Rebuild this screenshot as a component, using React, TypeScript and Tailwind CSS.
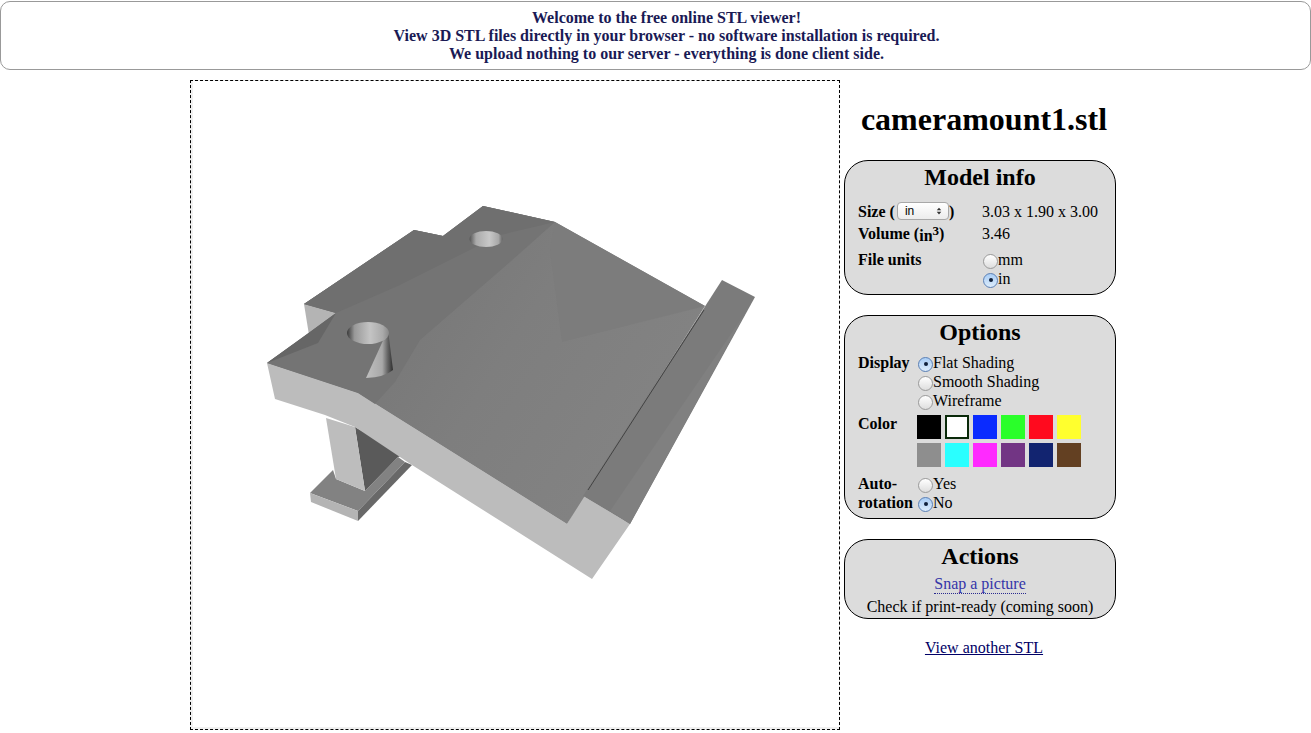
import React from 'react';

const Radio: React.FC<{ on?: boolean }> = ({ on }) =>
  on ? (
    <span className="inline-flex w-[15px] h-[15px] shrink-0 rounded-full border border-[#5a7fb5] bg-gradient-to-b from-[#a9cdf5] to-[#dcecfb] items-center justify-center">
      <span className="w-[4px] h-[4px] rounded-full bg-[#10203a]" />
    </span>
  ) : (
    <span className="inline-block w-[15px] h-[15px] shrink-0 rounded-full border border-[#9a9a9a] bg-gradient-to-b from-[#ffffff] to-[#dedede]" />
  );

const RadioRow: React.FC<{ on?: boolean; label: string }> = ({ on, label }) => (
  <div className="flex items-center h-[19px]">
    <span className="mt-[3px] flex">
      <Radio on={on} />
    </span>
    <span>{label}</span>
  </div>
);

const colors = [
  'bg-[#000000]',
  'bg-[#ffffff] border-2 border-[#0a2a0a]',
  'bg-[#0a2bff]',
  'bg-[#2aff2a]',
  'bg-[#ff0a1e]',
  'bg-[#ffff2e]',
  'bg-[#8e8e8e]',
  'bg-[#2affff]',
  'bg-[#ff2aff]',
  'bg-[#723584]',
  'bg-[#122470]',
  'bg-[#634022]',
];

const Model: React.FC = () => (
  <svg viewBox="193 81 646 646" className="w-full h-full block">
    <defs>
      <linearGradient id="hole1" x1="0" x2="1" y1="0" y2="0">
        <stop offset="0" stopColor="#555" />
        <stop offset="0.2" stopColor="#aaa" />
        <stop offset="0.6" stopColor="#c8c8c8" />
        <stop offset="0.88" stopColor="#a8a8a8" />
        <stop offset="1" stopColor="#666" />
      </linearGradient>
      <linearGradient id="hole2" x1="0" x2="1" y1="0" y2="0">
        <stop offset="0" stopColor="#3a3a3a" />
        <stop offset="0.18" stopColor="#999" />
        <stop offset="0.55" stopColor="#c4c4c4" />
        <stop offset="0.85" stopColor="#aaa" />
        <stop offset="1" stopColor="#888" />
      </linearGradient>
      <linearGradient id="bore" x1="0" x2="1" y1="0" y2="0">
        <stop offset="0" stopColor="#c0c0c0" />
        <stop offset="0.6" stopColor="#a8a8a8" />
        <stop offset="0.8" stopColor="#666" />
        <stop offset="1" stopColor="#2e2e2e" />
      </linearGradient>
      <linearGradient id="plate" gradientUnits="userSpaceOnUse" x1="400" y1="300" x2="620" y2="440">
        <stop offset="0" stopColor="#787878" />
        <stop offset="0.45" stopColor="#7e7e7e" />
        <stop offset="1" stopColor="#828282" />
      </linearGradient>
    </defs>
    {/* foot and pillar */}
    <polygon points="310,493 333,470 336,479 365,491 398,457 405,462 358,511" fill="#828282" />
    <polygon points="310,493 358,511 358,521 311,502" fill="#b4b4b4" />
    <polygon points="358,511 405,462 412,465 358,521" fill="#686868" />
    <polygon points="355,427 405,455 398,457 365,491" fill="#5a5a5a" />
    <polygon points="326,418 355,427 365,491 336,479" fill="#bdbdbd" />
    {/* notch side */}
    <polygon points="304,304 336,313 309,335" fill="#b4b4b4" />
    {/* front face */}
    <polygon
      points="267,363 358,393 567,524 583,496 630,524 592,579 412,465 355,427 325,415 275,399"
      fill="#bcbcbc"
    />
    {/* top plate */}
    <polygon
      points="304,304 414,230 443,236 483,206 555,222 705,306 567,524 358,393 267,363 309,333 336,313"
      fill="url(#plate)"
    />
    <polygon
      points="304,304 414,230 443,236 483,206 555,222 510,262 420,340 395,382 375,404 358,393 267,363 309,333 336,313"
      fill="#747474"
    />
    <polygon points="414,230 443,236 483,206 555,222 500,235 400,285 336,313 304,304" fill="#6f6f6f" />
    <polygon points="267,363 336,313 318,343" fill="#666666" />
    <polygon points="555,222 705,306 562,342 550,250" fill="#7c7c7c" />
    {/* holes */}
    <ellipse cx="486" cy="239" rx="16.5" ry="8" fill="url(#hole1)" />
    <path d="M381 345 L388 330 L393 370 Q385 377 366 378 Z" fill="url(#bore)" />
    <ellipse cx="368" cy="333" rx="21" ry="11" fill="url(#hole2)" />
    {/* rail */}
    <polygon points="722,280 755,297 630,524 583,496" fill="#7b7b7b" />
    <polygon points="746,312 630,524 610,511" fill="#808080" />
    <line x1="704" y1="310" x2="588" y2="490" stroke="#333" strokeWidth="0.8" />
  </svg>
);

const Panel: React.FC<{ title: string; className: string; children: React.ReactNode }> = ({
  title,
  className,
  children,
}) => (
  <div className={`w-[272px] rounded-[24px] border border-black bg-[#dcdcdc] ${className}`}>
    <h2 className="text-[24px] leading-[28px] font-bold text-center pt-[2px]">{title}</h2>
    {children}
  </div>
);

const App: React.FC = () => (
  <div className="font-['Liberation_Serif',serif] text-[16px] leading-[19px] text-black bg-white min-h-[733px]">
    <div className="mt-[1px] h-[69px] rounded-[10px] border border-[#999999] text-center font-bold text-[#1a1a55] text-[16px] leading-[18px] pt-[7px] pl-[22px]">
      <div>Welcome to the free online STL viewer!</div>
      <div>View 3D STL files directly in your browser - no software installation is required.</div>
      <div>We upload nothing to our server - everything is done client side.</div>
    </div>

    <div className="flex pl-[190px] mt-[10px]">
      <div className="w-[650px] h-[650px] border border-dashed border-black bg-[#f0f0f0] pl-[2px] pb-[2px]">
        <div className="w-full h-full bg-white">
          <Model />
        </div>
      </div>

      <div className="w-[280px] ml-[4px]">
        <h1 className="text-[32px] leading-[37px] font-bold text-center mt-[21px]">cameramount1.stl</h1>

        <Panel title="Model info" className="mt-[22px] h-[135px]">
          <div className="grid grid-cols-[124px_1fr] pl-[13px] mt-[9px]">
            <div className="font-bold flex items-center h-[22px]">
              Size (
              <span className="relative inline-flex items-center w-[52px] h-[18px] ml-[2px] rounded-[4px] border border-[#a8a8a8] bg-gradient-to-b from-[#ffffff] to-[#ececec] font-['Liberation_Sans',sans-serif] font-normal text-[12px] pl-[7px]">
                in
                <svg viewBox="0 0 8 12" className="absolute right-[6px] top-[3px] w-[6px] h-[10px]">
                  <path d="M1 5 L4 1.5 L7 5 Z M1 7 L4 10.5 L7 7 Z" fill="#333" />
                </svg>
              </span>
              )
            </div>
            <div className="h-[22px] flex items-center">3.03 x 1.90 x 3.00</div>
            <div className="font-bold h-[23px] flex items-center">
              Volume (
              <span className="relative top-[2px]">in</span>
              <sup className="text-[13px] relative top-[-3px]">3</sup>)
            </div>
            <div className="h-[23px] flex items-center">3.46</div>
            <div className="font-bold mt-[5px]">File units</div>
            <div className="mt-[5px] ml-[1px]">
              <RadioRow label="mm" />
              <RadioRow on label="in" />
            </div>
          </div>
        </Panel>

        <Panel title="Options" className="mt-[20px] h-[204px]">
          <div className="grid grid-cols-[60px_1fr] pl-[13px] mt-[7px]">
            <div className="font-bold">Display</div>
            <div>
              <RadioRow on label="Flat Shading" />
              <RadioRow label="Smooth Shading" />
              <RadioRow label="Wireframe" />
            </div>
            <div className="font-bold mt-[4px]">Color</div>
            <div className="grid grid-cols-[repeat(6,24px)] gap-[4px] ml-[-1px] mt-[5px]">
              {colors.map((c) => (
                <div key={c} className={`w-[24px] h-[24px] ${c}`} />
              ))}
            </div>
            <div className="font-bold mt-[7px] leading-[19px]">
              Auto-
              <br />
              rotation
            </div>
            <div className="mt-[7px]">
              <RadioRow label="Yes" />
              <RadioRow on label="No" />
            </div>
          </div>
        </Panel>

        <Panel title="Actions" className="mt-[20px] h-[80px]">
          <div className="text-center">
            <div className="h-[23px] mt-[4px]">
              <a className="text-[#3535a8] border-b border-dotted border-[#2a2a90] pb-[1px]">Snap a picture</a>
            </div>
            <div>Check if print-ready (coming soon)</div>
          </div>
        </Panel>

        <div className="text-center mt-[19px]">
          <a className="text-[#000066] underline">View another STL</a>
        </div>
      </div>
    </div>
  </div>
);

export default App;
